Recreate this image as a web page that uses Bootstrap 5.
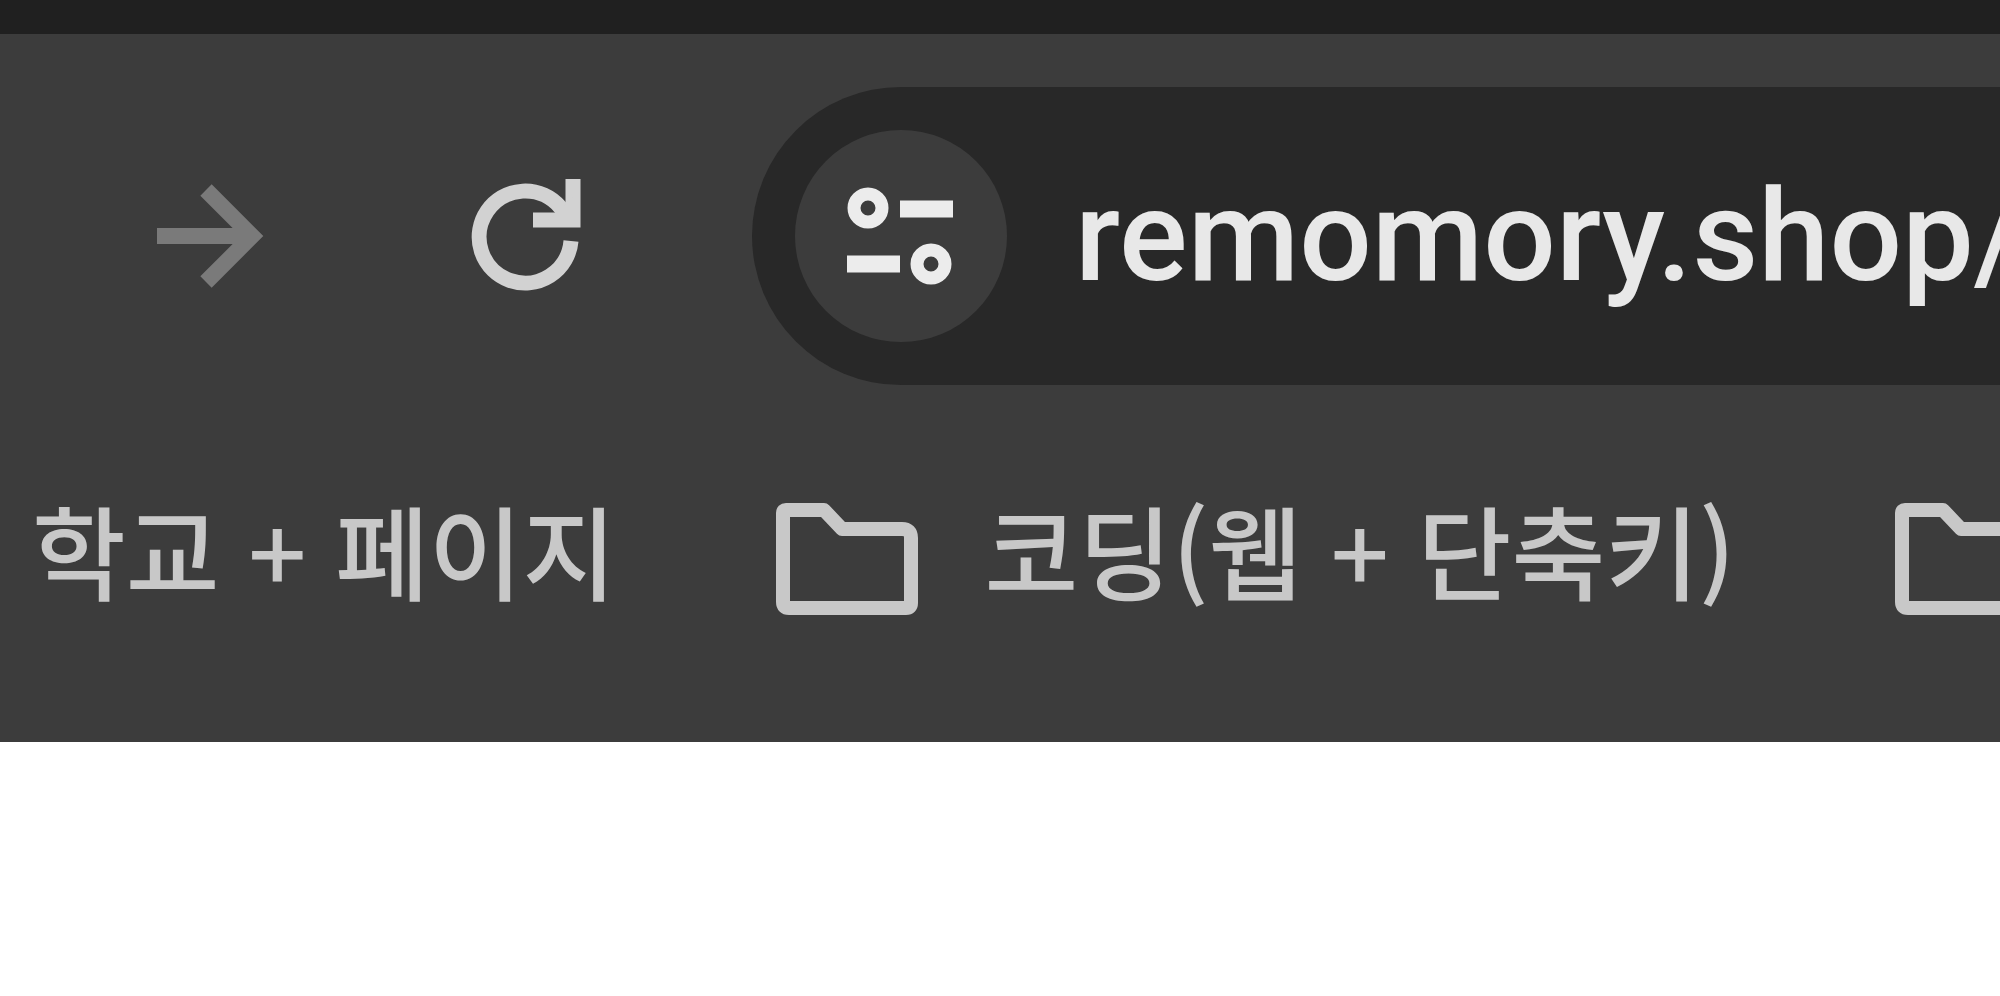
<!DOCTYPE html>
<html lang="ko">
<head>
<meta charset="utf-8">
<meta name="viewport" content="width=device-width, initial-scale=1">
<title>remomory.shop</title>
<link href="https://cdn.jsdelivr.net/npm/bootstrap@5.3.0/dist/css/bootstrap.min.css" rel="stylesheet">
<style>
  body { background: #fff; font-family: Roboto, "Noto Sans CJK KR", sans-serif; }
  .tab-strip { height: 34px; background: #202020; }
  .browser-chrome { background: #3c3c3c; }
  .toolbar-row { padding: 53px 0 0 120px; gap: 138px; }
  .tool-btn { width: 178px; height: 178px; color: #d2d2d2; }
  .tool-btn:disabled { color: #7a7a7a; opacity: 1; border: 0; }
  .address-bar { background: #282828; padding: 43px 0 43px 43px; gap: 68px; border-radius: 149px 0 0 149px; min-width: 0; }
  .site-btn, .site-btn:hover { width: 212px; height: 212px; background: #3c3c3c; color: #ececec; }
  .address-input, .address-input:focus { min-width: 0; height: 212px; color: #e8e8e8; font-size: 128px; line-height: 160px; font-weight: 500; outline: 0; }
  .bookmark-row { padding: 84px 0 113px 32px; gap: 156px; }
  .bookmark-item { gap: 62px; color: #c8c8c8; font: 500 102px/160px "Noto Sans CJK KR", sans-serif; }
  .bookmark-item svg { width: 150px; height: 120px; margin-top: 20px; }
</style>
</head>
<body class="overflow-hidden">
<div class="tab-strip"></div>
<header class="browser-chrome overflow-hidden">
  <div class="toolbar-row d-flex align-items-center">
    <button type="button" class="tool-btn btn p-0 border-0 flex-shrink-0" aria-label="앞으로" disabled>
      <svg class="d-block w-100 h-100" viewBox="0 0 178 178" fill="none" stroke="currentColor" stroke-width="16" aria-hidden="true">
        <path d="M37 89H130M86 43L132 89L86 135"/>
      </svg>
    </button>
    <button type="button" class="tool-btn btn p-0 border-0 flex-shrink-0" aria-label="새로고침">
      <svg class="d-block w-100 h-100" viewBox="0 0 178 178" fill="none" stroke="currentColor" stroke-width="15" aria-hidden="true">
        <path d="M135 94A46 46 0 1 1 124 60L134 74"/>
        <path d="M137 32V73H97"/>
        <path d="M137 50V73H112Z" fill="currentColor" stroke="none"/>
      </svg>
    </button>
    <div class="address-bar d-flex align-items-center flex-grow-1">
      <button type="button" class="site-btn btn rounded-circle border-0 p-0 flex-shrink-0" aria-label="사이트 정보 보기">
        <svg class="d-block w-100 h-100" viewBox="0 0 212 212" fill="none" stroke="currentColor" aria-hidden="true">
          <g stroke-width="13"><circle cx="73" cy="78" r="14"/><circle cx="136" cy="134" r="14"/></g>
          <path stroke-width="17" d="M105 79H158M52 134H105"/>
        </svg>
      </button>
      <input class="address-input flex-grow-1 bg-transparent border-0 p-0" type="text" aria-label="주소" value="remomory.shop/" spellcheck="false">
    </div>
  </div>
  <nav class="bookmark-row d-flex align-items-center text-nowrap" aria-label="북마크">
    <a href="#" class="bookmark-item d-flex align-items-center flex-shrink-0 text-decoration-none">학교 + 페이지</a>
    <a href="#" class="bookmark-item d-flex align-items-center flex-shrink-0 text-decoration-none">
      <svg viewBox="0 0 150 120" fill="none" stroke="currentColor" stroke-width="14" stroke-linejoin="round" aria-hidden="true"><path d="M14 11H52L70 30H130Q139 30 139 39V104Q139 109 134 109H17Q11 109 11 103V14Q11 11 14 11Z"/></svg>
      코딩(웹 + 단축키)
    </a>
    <a href="#" class="bookmark-item d-flex align-items-center flex-shrink-0" aria-label="북마크 폴더">
      <svg viewBox="0 0 150 120" fill="none" stroke="currentColor" stroke-width="14" stroke-linejoin="round" aria-hidden="true"><path d="M14 11H52L70 30H130Q139 30 139 39V104Q139 109 134 109H17Q11 109 11 103V14Q11 11 14 11Z"/></svg>
    </a>
  </nav>
</header>
<main></main>
<script src="https://cdn.jsdelivr.net/npm/bootstrap@5.3.0/dist/js/bootstrap.bundle.min.js"></script>
</body>
</html>
